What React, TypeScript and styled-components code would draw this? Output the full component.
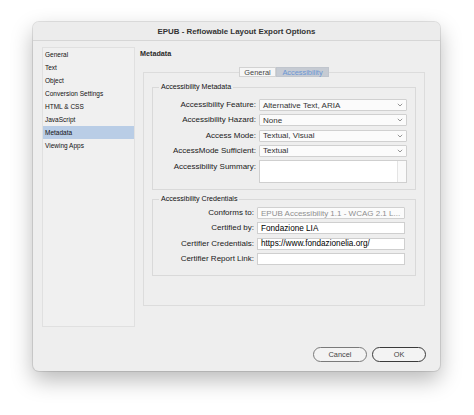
import { Fragment } from "react";
import styled, { createGlobalStyle } from "styled-components";

const GlobalStyle = createGlobalStyle`
    html, body {
        margin: 0;
        background: #ffffff;
    }
    body {
        font-family: "Liberation Sans", Arial, sans-serif;
        color: #222;
    }
`
const Page = styled.div`
    padding: 22px 0 0 33px;
    height: 415px;
    box-sizing: border-box;
`
const Window = styled.div`
    width: 407px;
    height: 349px;
    box-sizing: border-box;
    background: #eeeeee;
    border-radius: 6px;
    box-shadow: 0 9px 22px rgba(0, 0, 0, 0.28), 0 0 0 1px rgba(0, 0, 0, 0.1);
    display: flex;
    flex-direction: column;
    overflow: hidden;
`
const TitleBar = styled.div`
    height: 18px;
    display: flex;
    align-items: center;
    justify-content: center;
    background: #ececec;
    border-bottom: 1px solid #d6d6d6;
    font-size: 7.9px;
    font-weight: bold;
    color: #333;
`
const Body = styled.div`
    display: flex;
    padding: 6px 15px 0 9px;
`
const Sidebar = styled.div`
    width: 93px;
    height: 280px;
    box-sizing: border-box;
    background: #f0f0f0;
    border: 1px solid #e0e0e0;
    display: flex;
    flex-direction: column;
`
const SideItem = styled.div<{ $active?: boolean }>`
    height: 13px;
    line-height: 13px;
    padding-left: 2px;
    font-size: 6.5px;
    color: #111;
    background: ${p => (p.$active ? "#b9cde6" : "transparent")};
`
const Main = styled.div`
    flex: 1;
    margin-left: 5px;
    display: flex;
    flex-direction: column;
`
const Heading = styled.div`
    height: 13px;
    line-height: 13px;
    font-size: 7.2px;
    font-weight: bold;
    color: #2a2a2a;
`
const TabRow = styled.div`
    margin: 7px 0 -5px 3px;
    height: 10px;
    display: flex;
    justify-content: center;
    position: relative;
    z-index: 1;
`
const Tab = styled.div<{ $selected?: boolean; $w: number }>`
    width: ${p => p.$w}px;
    height: 10px;
    box-sizing: border-box;
    display: flex;
    align-items: center;
    justify-content: center;
    font-size: 7.4px;
    background: ${p => (p.$selected ? "#c6cbd3" : "#f6f6f6")};
    color: ${p => (p.$selected ? "#6a95d4" : "#444")};
    border: 1px solid ${p => (p.$selected ? "#c0c5cd" : "#d2d2d2")};
`
const Panel = styled.div`
    margin-left: 3px;
    width: 282px;
    height: 234px;
    box-sizing: border-box;
    border: 1px solid #dcdcdc;
    padding: 9px 8px 0 8px;
    display: flex;
    flex-direction: column;
    gap: 4px;
`
const Group = styled.fieldset<{ $pt: number; $pb: number }>`
    margin: 0;
    min-width: 0;
    padding: ${p => p.$pt}px 0 ${p => p.$pb}px 0;
    border: 1px solid #d9d9d9;
`
const Legend = styled.legend`
    margin-left: 6px;
    padding: 0 2px;
    height: 10px;
    line-height: 10px;
    font-size: 7.1px;
    color: #111;
`
const FormGrid = styled.div<{ $label: number }>`
    display: grid;
    grid-template-columns: ${p => p.$label}px 148px;
    column-gap: 3px;
    row-gap: 3.3px;
    align-items: start;
`
const Label = styled.div<{ $top?: boolean }>`
    text-align: right;
    font-size: 8px;
    height: 12px;
    line-height: ${p => (p.$top ? "14px" : "12px")};
    color: #1a1a1a;
    white-space: nowrap;
`
const Select = styled.div<{ $muted?: boolean }>`
    height: 12px;
    box-sizing: border-box;
    display: flex;
    align-items: center;
    justify-content: space-between;
    padding: 0 3px 0 3px;
    background: #fbfbfb;
    border: 1px solid #d0d0d0;
    border-radius: 1px;
    font-size: 8px;
    color: ${p => (p.$muted ? "#8f8f8f" : "#333")};
    white-space: nowrap;
    overflow: hidden;
`
const Input = styled.div`
    height: 12px;
    box-sizing: border-box;
    display: flex;
    align-items: center;
    padding: 0 3px;
    background: #ffffff;
    border: 1px solid #cfcfcf;
    font-size: 8.2px;
    color: #000;
    white-space: nowrap;
`
const TextArea = styled.div`
    height: 23px;
    box-sizing: border-box;
    background: #ffffff;
    border: 1px solid #cfcfcf;
    display: flex;
    justify-content: flex-end;
`
const ScrollTrack = styled.div`
    width: 8px;
    border-left: 1px solid #e4e4e4;
    background: #fafafa;
`
const Footer = styled.div`
    margin-top: auto;
    display: flex;
    justify-content: flex-end;
    gap: 5px;
    padding: 0 14px 9px 0;
`
const Button = styled.button<{ $primary?: boolean }>`
    width: 54px;
    height: 15px;
    border-radius: 8px;
    box-sizing: border-box;
    background: #f3f3f3;
    border: ${p => (p.$primary ? "1.5px solid #3a3a3a" : "1px solid #7a7a7a")};
    font-family: "Liberation Sans", Arial, sans-serif;
    font-size: 7.4px;
    color: #444;
    padding: 0;
`

const Chevron = () => (
    <svg width="6" height="4" viewBox="0 0 6 4">
        <polyline points="0.8,0.8 3,3 5.2,0.8" fill="none" stroke="#8a8a8a" strokeWidth="0.9" />
    </svg>
)

const sideItems = ["General", "Text", "Object", "Conversion Settings", "HTML & CSS", "JavaScript", "Metadata", "Viewing Apps"]

const metadataRows = [
    { label: "Accessibility Feature:", value: "Alternative Text, ARIA" },
    { label: "Accessibility Hazard:", value: "None" },
    { label: "Access Mode:", value: "Textual, Visual" },
    { label: "AccessMode Sufficient:", value: "Textual" },
]

export default function App() {
    return (
        <Page>
            <GlobalStyle />
            <Window>
                <TitleBar>EPUB - Reflowable Layout Export Options</TitleBar>
                <Body>
                    <Sidebar>
                        {sideItems.map(item => (
                            <SideItem key={item} $active={item === "Metadata"}>{item}</SideItem>
                        ))}
                    </Sidebar>
                    <Main>
                        <Heading>Metadata</Heading>
                        <TabRow>
                            <Tab $w={37}>General</Tab>
                            <Tab $w={53} $selected>Accessibility</Tab>
                        </TabRow>
                        <Panel>
                            {/* Accessibility Metadata */}
                            <Group $pt={7} $pb={6}>
                                <Legend>Accessibility Metadata</Legend>
                                <FormGrid $label={103}>
                                    {metadataRows.map(row => (
                                        <Fragment key={row.label}>
                                            <Label>{row.label}</Label>
                                            <Select>{row.value}<Chevron /></Select>
                                        </Fragment>
                                    ))}
                                    <Label $top>Accessibility Summary:</Label>
                                    <TextArea><ScrollTrack /></TextArea>
                                </FormGrid>
                            </Group>
                            {/* Accessibility Credentials */}
                            <Group $pt={3} $pb={10}>
                                <Legend>Accessibility Credentials</Legend>
                                <FormGrid $label={101}>
                                    <Label>Conforms to:</Label>
                                    <Select $muted>EPUB Accessibility 1.1 - WCAG 2.1 L...<Chevron /></Select>
                                    <Label>Certified by:</Label>
                                    <Input>Fondazione LIA</Input>
                                    <Label>Certifier Credentials:</Label>
                                    <Input>https://www.fondazionelia.org/</Input>
                                    <Label>Certifier Report Link:</Label>
                                    <Input />
                                </FormGrid>
                            </Group>
                        </Panel>
                    </Main>
                </Body>
                <Footer>
                    <Button>Cancel</Button>
                    <Button $primary>OK</Button>
                </Footer>
            </Window>
        </Page>
    )
}
